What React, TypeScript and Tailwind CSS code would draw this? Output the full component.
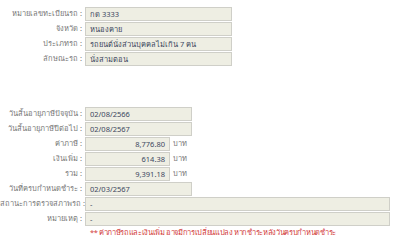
import React from 'react';

type Row = {
  label: string;
  value: string;
  width: string;
  align?: 'left' | 'right';
  unit?: string;
};

const vehicleRows: Row[] = [
  { label: 'หมายเลขทะเบียนรถ :', value: 'กด 3333', width: 'w-[147px]' },
  { label: 'จังหวัด :', value: 'หนองคาย', width: 'w-[147px]' },
  { label: 'ประเภทรถ :', value: 'รถยนต์นั่งส่วนบุคคลไม่เกิน 7 คน', width: 'w-[147px]' },
  { label: 'ลักษณะรถ :', value: 'นั่งสามตอน', width: 'w-[147px]' },
];

const taxRows: Row[] = [
  { label: 'วันสิ้นอายุภาษีปัจจุบัน :', value: '02/08/2566', width: 'w-[107px]' },
  { label: 'วันสิ้นอายุภาษีปีต่อไป :', value: '02/08/2567', width: 'w-[107px]' },
  { label: 'ค่าภาษี :', value: '8,776.80', width: 'w-[85px]', align: 'right', unit: 'บาท' },
  { label: 'เงินเพิ่ม :', value: '614.38', width: 'w-[85px]', align: 'right', unit: 'บาท' },
  { label: 'รวม :', value: '9,391.18', width: 'w-[85px]', align: 'right', unit: 'บาท' },
  { label: 'วันที่ครบกำหนดชำระ :', value: '02/03/2567', width: 'w-[107px]' },
  { label: 'สถานะการตรวจสภาพรถ :', value: '-', width: 'w-[305px]' },
  { label: 'หมายเหตุ :', value: '-', width: 'w-[305px]' },
];

function Field({ row }: { row: Row }) {
  return (
    <div className="flex items-center h-[15px]">
      <div className="w-[85px] shrink-0 pr-[3px] text-right text-[#777777] whitespace-nowrap">
        {row.label}
      </div>
      <div
        className={`${row.width} h-[14px] border border-[#cfcfc8] bg-[#eeeee3] text-[#3c4660] leading-[12px] flex items-center ${
          row.align === 'right' ? 'justify-end pr-[4px]' : 'pl-[4px]'
        }`}
      >
        {row.value}
      </div>
      {row.unit && <div className="pl-[3px] text-[#777777]">{row.unit}</div>}
    </div>
  );
}

export default function App() {
  return (
    <div
      className="w-[400px] h-[250px] bg-white text-[7.5px] overflow-hidden"
      style={{ fontFamily: '"Noto Sans", "DejaVu Sans", sans-serif' }}
    >
      <div className="pt-[6px] flex flex-col">
        {vehicleRows.map((r) => (
          <Field key={r.label} row={r} />
        ))}
      </div>

      <div className="mt-[40px] flex flex-col">
        {taxRows.map((r) => (
          <Field key={r.label} row={r} />
        ))}
      </div>

      {/* Warning note */}
      <div className="pl-[90px] pt-[1px] text-[7.5px] tracking-[-0.35px] text-[#d23a3a] whitespace-nowrap">
        ** ค่าภาษีรถและเงินเพิ่ม อาจมีการเปลี่ยนแปลง หากชำระหลังวันครบกำหนดชำระ
      </div>
    </div>
  );
}
